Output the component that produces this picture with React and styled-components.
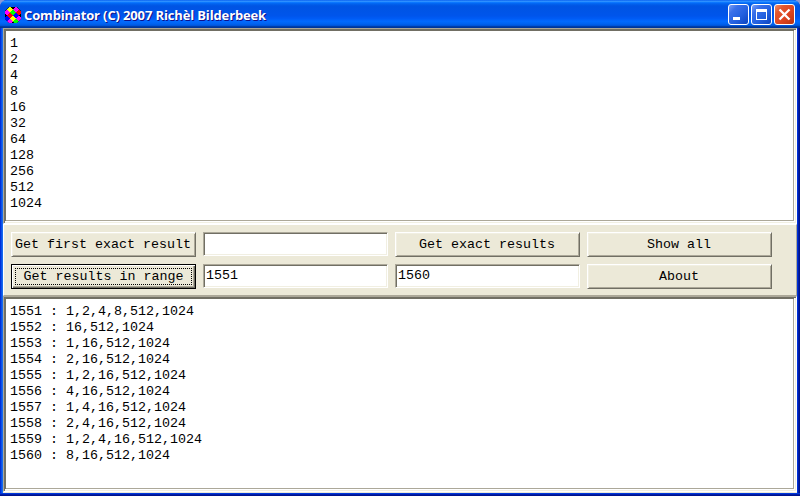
import React from "react";
import styled, { createGlobalStyle, css } from "styled-components";

const GlobalStyle = createGlobalStyle`
  * { box-sizing: border-box; }
  body { margin: 0; overflow: hidden; background: #8a9ad8; }
`;

const mono = css`
  font-family: "Liberation Mono", monospace;
  font-size: 13.333px;
  line-height: 16px;
  color: #000;
`;

const Window = styled.div`
  width: 800px;
  height: 496px;
  padding: 0 3px;
  display: flex;
  flex-direction: column;
  overflow: hidden;
  border-radius: 7px 7px 0 0;
  background: linear-gradient(90deg, #0030d8 0 1px, #0a50e8 1px 2px, #166aee 2px 3px, #0036d8 3px 797px, #0030d8 797px 798px, #001ea8 798px 799px, #00138c 799px);
`;

const BottomEdge = styled.div`
  height: 3px;
  flex: none;
  margin: 0 -3px;
  background: linear-gradient(180deg, #0038dc 0 1px, #001ea8 1px 2px, #00138c 2px);
`;

const TitleBar = styled.header`
  height: 28px;
  flex: none;
  margin: 0 -3px;
  padding: 0 5px;
  display: flex;
  align-items: center;
  background: linear-gradient(180deg, #0058ee 0%, #3593ff 4%, #288eff 6%, #127dff 8%, #036ffc 10%, #0262ee 14%, #0057e5 20%, #0054e3 24%, #0055eb 56%, #005bf5 66%, #026afe 76%, #0062ef 86%, #0052d6 92%, #0040ab 94%, #003092 100%);
`;

const AppIcon = styled.svg`
  width: 16px;
  height: 16px;
  display: block;
  flex: none;
  margin-top: 1px;
`;

const Title = styled.h1`
  margin: 1px auto 0 3px;
  font: 700 13px/18px "Open Sans", sans-serif;
  letter-spacing: -0.14px;
  white-space: nowrap;
  color: #fff;
  text-shadow: 1px 1px #0f1089;
`;

const Controls = styled.div`
  display: flex;
  gap: 2px;
  margin-top: 1px;
`;

const ControlButton = styled.button`
  width: 21px;
  height: 21px;
  padding: 0;
  border: 1px solid #fff;
  border-radius: 3px;
  background: ${(p) =>
    p.$close
      ? "linear-gradient(135deg, #f0906c 0%, #e4582e 25%, #dd4420 60%, #b83210 100%)"
      : "linear-gradient(135deg, #7da0f4 0%, #3a70ea 25%, #2260e0 60%, #0c44c0 100%)"};
  svg { display: block; width: 19px; height: 19px; }
`;

const Client = styled.main`
  flex: 1;
  min-height: 0;
  display: flex;
  flex-direction: column;
  background: #ece9d8;
`;

const Memo = styled.pre`
  ${mono}
  margin: 0;
  height: 196px;
  flex: none;
  padding: 7px 6px;
  background: #fff;
  border: 1px solid;
  border-color: #aca899 #fff #fff #aca899;
  box-shadow: inset 1px 1px #716f64, inset -1px -1px #f1efe2, inset -2px -2px #fff, inset 2px 2px #716f64, inset -3px -3px #aca899;
`;

const Panel = styled.section`
  height: 72px;
  flex: none;
  padding: 7px 7px 0;
  display: grid;
  grid-template-columns: repeat(4, 185px);
  grid-auto-rows: 25px;
  align-content: start;
  gap: 7px;
  border: 1px solid;
  border-color: #fff #aca899 #aca899 #fff;
`;

const PushButton = styled.button`
  ${mono}
  height: 25px;
  padding: 0 1px 0 0;
  white-space: nowrap;
  background: #ece9d8;
  border: 1px solid;
  border-color: ${(p) => (p.$active ? "#000" : "#fff #716f64 #716f64 #fff")};
  box-shadow: ${(p) =>
    p.$active
      ? "inset 1px 1px #fff, inset -1px -1px #716f64, inset -2px -2px #aca899"
      : "inset 1px 1px #f1efe2, inset -1px -1px #aca899"};
`;

const FocusFrame = styled.span`
  display: block;
  margin: 0 2px 0 3px;
  height: 17px;
  line-height: 15px;
  border: 1px dotted #000;
`;

const Field = styled.input`
  ${mono}
  width: 185px;
  height: 24px;
  padding: 0 3px 2px 2px;
  outline: none;
  border-radius: 0;
  background: #fff;
  border: 1px solid;
  border-color: #aca899 #fff #fff #aca899;
  box-shadow: inset 1px 1px #716f64, inset -1px -1px #f1efe2;
`;

const values = [1, 2, 4, 8, 16, 32, 64, 128, 256, 512, 1024];

const results = [
  "1551 : 1,2,4,8,512,1024",
  "1552 : 16,512,1024",
  "1553 : 1,16,512,1024",
  "1554 : 2,16,512,1024",
  "1555 : 1,2,16,512,1024",
  "1556 : 4,16,512,1024",
  "1557 : 1,4,16,512,1024",
  "1558 : 2,4,16,512,1024",
  "1559 : 1,2,4,16,512,1024",
  "1560 : 8,16,512,1024",
];

const diamonds = [
  [5, 2.5, "#ff0"], [11, 2.5, "#f0f"], [2, 5.5, "#f0f"], [8, 5.5, "#0f0"], [14, 5.5, "#f00"],
  [5, 8.5, "#f00"], [11, 8.5, "#00f"], [2, 11.5, "#00f"], [8, 11.5, "#ff0"], [14, 11.5, "#f0f"],
  [5, 14.5, "#f0f"], [11, 14.5, "#0f0"],
];

export default function App() {
  return (
    <>
      <GlobalStyle />
      <Window>
        <TitleBar>
          <AppIcon viewBox="0 0 16 16" shapeRendering="crispEdges">
            <clipPath id="disc"><path d="M4 0h8l4 4v8l-4 4H4l-4-4V4z" /></clipPath>
            <g clipPath="url(#disc)">
              <rect width="16" height="16" fill="#000" />
              {diamonds.map(([x, y, c]) => (
                <path key={`${x}-${y}`} d={`M${x} ${y - 3}l3 3-3 3-3-3z`} fill={c} />
              ))}
            </g>
          </AppIcon>
          <Title>Combinator (C) 2007 Richèl Bilderbeek</Title>
          <Controls>
            <ControlButton aria-label="Minimize">
              <svg viewBox="0 0 19 19"><path d="M4 12h7v3H4z" fill="#fff" /></svg>
            </ControlButton>
            <ControlButton aria-label="Maximize">
              <svg viewBox="0 0 19 19"><path fillRule="evenodd" d="M4 4h11v11H4zM5 7v7h9V7z" fill="#fff" /></svg>
            </ControlButton>
            <ControlButton $close aria-label="Close">
              <svg viewBox="0 0 19 19"><path d="M5.3 5.3l8.400 8.400M13.700 5.300l-8.400 8.400" stroke="#fff" strokeWidth="2.3" strokeLinecap="square" /></svg>
            </ControlButton>
          </Controls>
        </TitleBar>
        <Client>
          <Memo>{values.join("\n")}</Memo>
          <Panel>
            <PushButton>Get first exact result</PushButton>
            <Field aria-label="Exact value" />
            <PushButton>Get exact results</PushButton>
            <PushButton>Show all</PushButton>
            <PushButton $active><FocusFrame>Get results in range</FocusFrame></PushButton>
            <Field aria-label="Range start" defaultValue="1551" />
            <Field aria-label="Range end" defaultValue="1560" />
            <PushButton>About</PushButton>
          </Panel>
          <Memo>{results.join("\n")}</Memo>
        </Client>
        <BottomEdge />
      </Window>
    </>
  );
}
